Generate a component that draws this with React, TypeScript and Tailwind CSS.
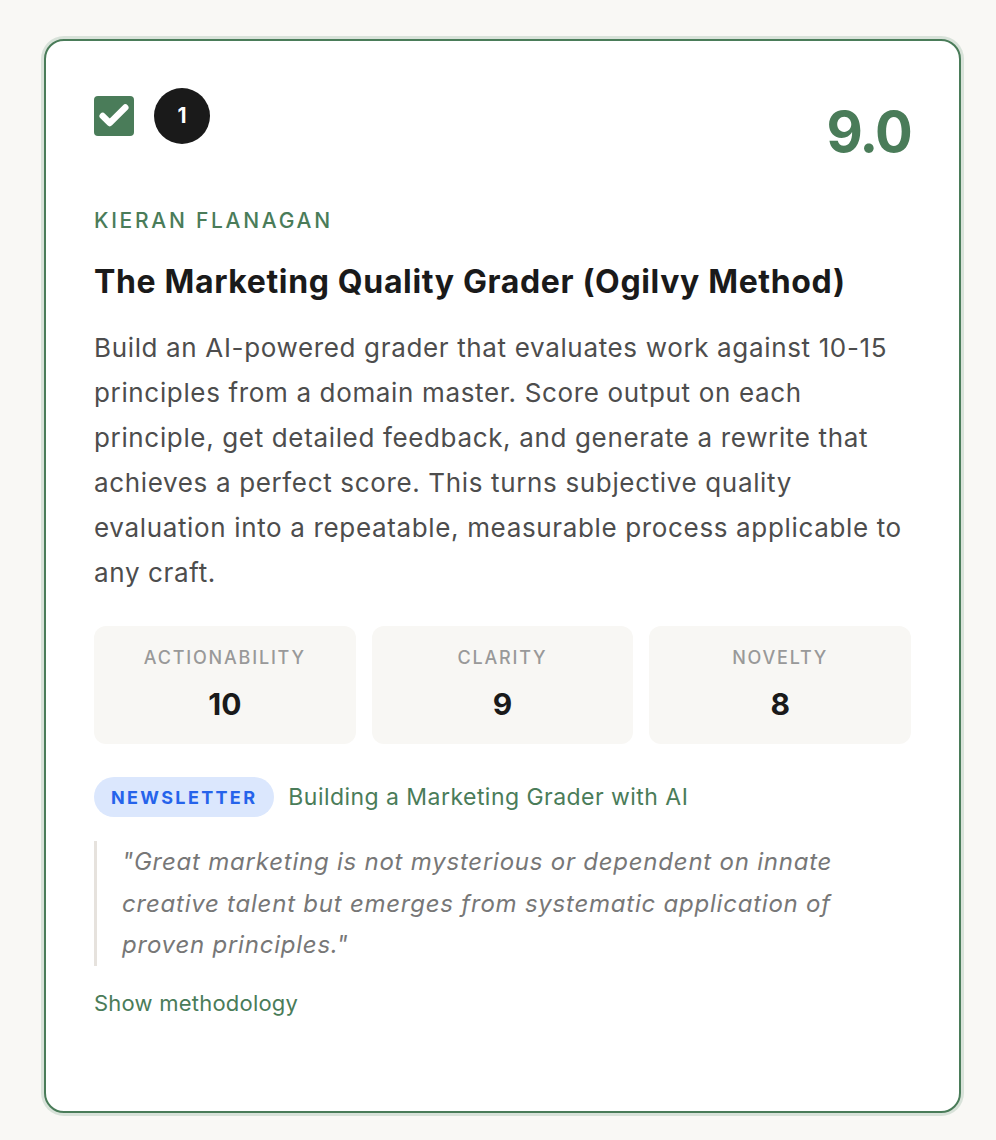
import { Check } from 'lucide-react';

const metrics = [
  { label: 'Actionability', value: 10 },
  { label: 'Clarity', value: 9 },
  { label: 'Novelty', value: 8 },
];

export default function App() {
  return (
    <div className="min-h-screen bg-[#f9f8f5] pl-[44px] pt-[39px] font-['Inter',sans-serif]">
      <div className="w-[917px] h-[1074px] bg-white border-2 border-[#4a7c59] rounded-[20px] shadow-[0_0_0_3px_#d8e2d9] px-12 pt-[47px]">
        {/* Header: select + rank + score */}
        <div className="flex items-start justify-between">
          <div className="flex items-center gap-5 h-14">
            <div className="w-10 h-10 rounded-[4px] bg-[#4a7c59] flex items-center justify-center">
              <Check className="w-[34px] h-[34px] text-white" strokeWidth={4.5} />
            </div>
            <div className="w-14 h-14 rounded-full bg-[#1a1a1a] text-white flex items-center justify-center text-[21px] font-bold">
              1
            </div>
          </div>
          <div className="mt-4 text-[56px] leading-none font-bold text-[#4a7c59] tracking-[-0.03em]">9.0</div>
        </div>

        {/* Author + title */}
        <div className="mt-[48px] text-[21px] leading-[25px] font-medium uppercase tracking-[0.13em] text-[#4a7c59]">
          Kieran Flanagan
        </div>
        <h2 className="mt-[29px] text-[32px] leading-[40px] font-bold text-[#1a1a1a] tracking-[0.02em]">
          The Marketing Quality Grader (Ogilvy Method)
        </h2>
        <p className="mt-[23px] text-[26px] leading-[45px] text-[#4d4d4d] tracking-[0.025em]">
          Build an AI-powered grader that evaluates work against 10-15 principles from a domain master. Score output on each
          principle, get detailed feedback, and generate a rewrite that achieves a perfect score. This turns subjective quality
          evaluation into a repeatable, measurable process applicable to any craft.
        </p>

        {/* Metrics */}
        <div className="mt-[31px] grid grid-cols-3 gap-4">
          {metrics.map((m) => (
            <div key={m.label} className="bg-[#f8f7f4] rounded-xl pt-[21px] pb-[22px] text-center">
              <div className="text-[18px] leading-[21.6px] font-medium uppercase tracking-[0.1em] text-[#999999]">
                {m.label}
              </div>
              <div className="mt-[17.6px] text-[30px] leading-[36px] font-bold text-[#1a1a1a]">{m.value}</div>
            </div>
          ))}
        </div>

        {/* Source */}
        <div className="mt-[33px] flex items-center gap-[14px]">
          <span className="h-10 px-[17px] rounded-full bg-[#dbe7fd] text-[#2563eb] text-[18px] font-bold uppercase tracking-[0.13em] flex items-center">
            Newsletter
          </span>
          <span className="text-[23px] tracking-[0.02em] text-[#4a7c59]">Building a Marketing Grader with AI</span>
        </div>

        {/* Quote */}
        <blockquote className="mt-6 border-l-[3px] border-[#e6e2dd] pl-[25px] text-[24px] leading-[41.5px] italic tracking-[0.032em] text-[#777777]">
          "Great marketing is not mysterious or dependent on innate creative talent but emerges from systematic application of
          proven principles."
        </blockquote>

        <button className="mt-[21px] block text-[22px] leading-[33px] tracking-[0.01em] text-[#4a7c59]">Show methodology</button>
      </div>
    </div>
  );
}
